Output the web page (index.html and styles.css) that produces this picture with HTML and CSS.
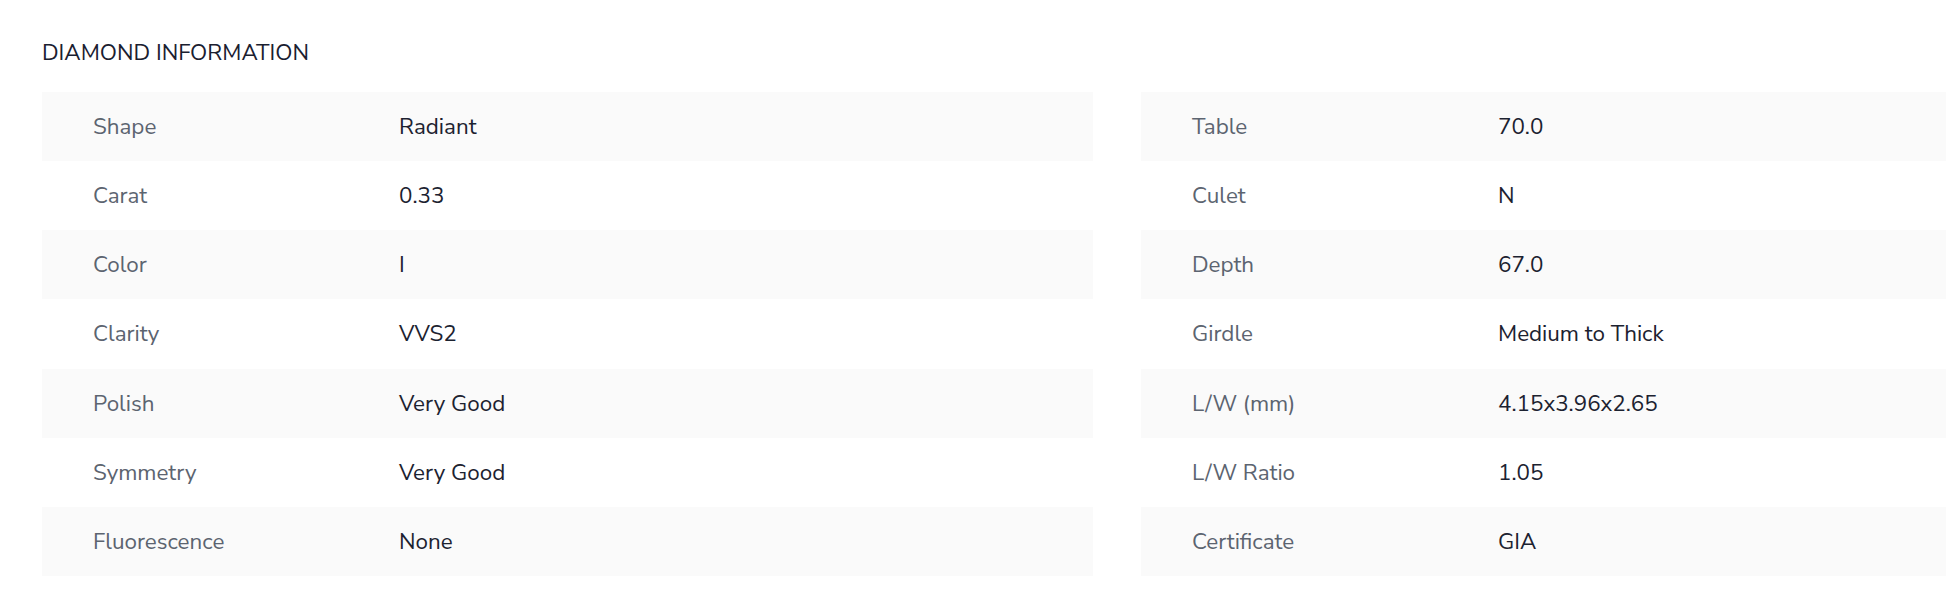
FILE: index.html
```html
<!DOCTYPE html>
<html lang="en">
<head>
<meta charset="utf-8">
<title>Diamond Information</title>
<link rel="stylesheet" href="styles.css">
</head>
<body>
<section class="info">
  <h2 class="info-title">DIAMOND INFORMATION</h2>
  <div class="info-grid">
    <div class="info-table">
      <div class="row"><span class="label">Shape</span><span class="value">Radiant</span></div>
      <div class="row"><span class="label">Carat</span><span class="value">0.33</span></div>
      <div class="row"><span class="label">Color</span><span class="value">I</span></div>
      <div class="row"><span class="label">Clarity</span><span class="value">VVS2</span></div>
      <div class="row"><span class="label">Polish</span><span class="value">Very Good</span></div>
      <div class="row"><span class="label">Symmetry</span><span class="value">Very Good</span></div>
      <div class="row"><span class="label">Fluorescence</span><span class="value">None</span></div>
    </div>
    <div class="info-table">
      <div class="row"><span class="label">Table</span><span class="value">70.0</span></div>
      <div class="row"><span class="label">Culet</span><span class="value">N</span></div>
      <div class="row"><span class="label">Depth</span><span class="value">67.0</span></div>
      <div class="row"><span class="label">Girdle</span><span class="value">Medium to Thick</span></div>
      <div class="row"><span class="label">L/W (mm)</span><span class="value">4.15x3.96x2.65</span></div>
      <div class="row"><span class="label">L/W Ratio</span><span class="value">1.05</span></div>
      <div class="row"><span class="label">Certificate</span><span class="value">GIA</span></div>
    </div>
  </div>
</section>
</body>
</html>
```
FILE: styles.css
```css
html, body {
  margin: 0;
  padding: 0;
  background: #ffffff;
}
body {
  font-family: "Nunito Sans", "Nunito", Lato, "Open Sans", sans-serif;
  overflow: hidden;
}
.info {
  padding: 38px 0 0 42px;
}
.info-title {
  margin: 0;
  font-size: 22.4px;
  font-weight: 400;
  line-height: 30px;
  color: #1a2030;
}
.info-grid {
  display: grid;
  grid-template-columns: 1051px minmax(0, 1fr);
  column-gap: 48px;
  margin-top: 24px;
}
.row {
  display: flex;
  align-items: center;
  height: 69.14px;
  padding-left: 51px;
  font-size: 22.4px;
  white-space: nowrap;
}
.row:nth-child(odd) {
  background: #fafafa;
}
.label {
  flex: 0 0 306px;
  color: #5c6470;
}
.value {
  color: #1c2230;
}
```
